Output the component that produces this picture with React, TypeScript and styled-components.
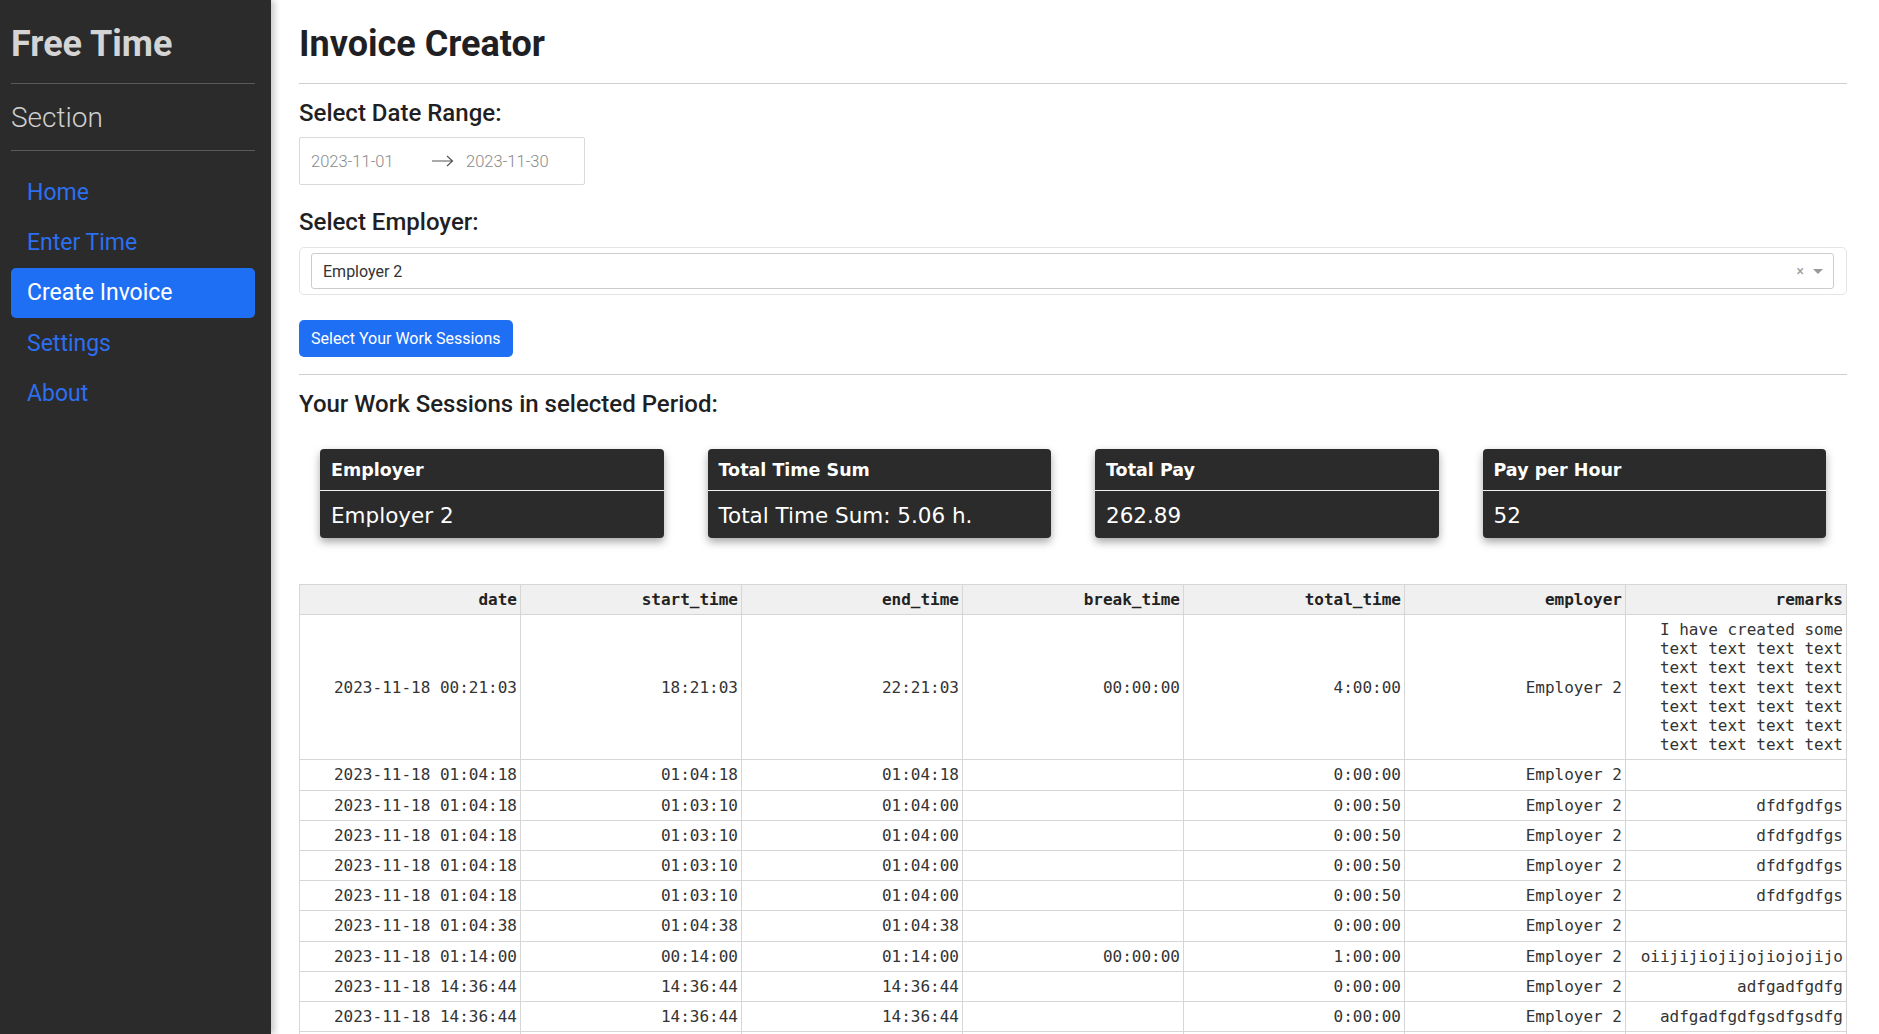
import React from "react";
import styled, { createGlobalStyle } from "styled-components";

const GlobalStyle = createGlobalStyle`
  html, body { margin: 0; padding: 0; background: #ffffff; }
  body { font-family: Roboto, "Open Sans", sans-serif; color: #262730; }
  * { box-sizing: border-box; }
`;

const Layout = styled.div`
  display: flex;
  min-height: 100vh;
`;

const Sidebar = styled.aside`
  flex: 0 0 271px;
  height: 100vh;
  position: sticky;
  top: 0;
  background: #2b2b2b;
  padding: 0 16px 0 11px;
  box-shadow: 4px 0 6px rgba(0, 0, 0, 0.2);
  z-index: 1;
`;

const Brand = styled.h1`
  margin: 22px 0 0;
  font-family: Roboto, sans-serif;
  font-weight: 700;
  font-size: 36px;
  line-height: 44px;
  color: #d4d4d4;
`;

const SideRule = styled.hr<{ $top: number }>`
  border: 0;
  border-top: 1px solid #5a5a5a;
  margin: ${(p) => p.$top}px 0 0;
`;

const SectionTitle = styled.h2`
  margin: 18px 0 0;
  font-family: Roboto, sans-serif;
  font-weight: 300;
  font-size: 28px;
  line-height: 32px;
  color: #cfcfcf;
`;

const Nav = styled.nav`
  display: flex;
  flex-direction: column;
  margin-top: 16px;
`;

const NavItem = styled.a<{ $active?: boolean }>`
  display: flex;
  align-items: center;
  height: 50.4px;
  padding-left: 16px;
  border-radius: 5px;
  font-family: Roboto, sans-serif;
  font-size: 23px;
  text-decoration: none;
  color: ${(p) => (p.$active ? "#ffffff" : "#2c6ff0")};
  background: ${(p) => (p.$active ? "#1f6ff5" : "transparent")};
  cursor: pointer;
`;

const Main = styled.main`
  flex: 1;
  padding: 0 32px 40px 28px;
  min-width: 0;
`;

const Title = styled.h1`
  margin: 22px 0 0;
  font-family: Roboto, sans-serif;
  font-weight: 700;
  font-size: 36px;
  line-height: 44px;
  color: #1f1f24;
`;

const Rule = styled.hr<{ $top: number }>`
  border: 0;
  border-top: 1px solid #cfcfcf;
  margin: ${(p) => p.$top}px 0 0;
`;

const SubTitle = styled.h3<{ $top: number }>`
  margin: ${(p) => p.$top}px 0 0;
  font-family: Roboto, sans-serif;
  font-weight: 500;
  font-size: 24px;
  line-height: 30px;
  color: #1f1f24;
`;

const DateRange = styled.div`
  margin-top: 9px;
  width: 286px;
  height: 48px;
  display: flex;
  align-items: center;
  padding-left: 11px;
  border: 1px solid #d9d9d9;
  border-radius: 2px;
  font-family: Roboto, sans-serif;
  font-weight: 300;
  font-size: 16.5px;
  color: #8a8a8a;
`;

const DateValue = styled.span<{ $w?: number }>`
  width: ${(p) => (p.$w ? `${p.$w}px` : "auto")};
`;

const ArrowIcon = styled.svg`
  width: 22px;
  height: 12px;
  margin-right: 12px;
  flex: none;
`;

const SelectWrap = styled.div`
  margin-top: 10px;
  height: 48px;
  padding: 5px 12px 5px 11px;
  border: 1px solid #e4e4e4;
  border-radius: 5px;
`;

const Select = styled.div`
  height: 36px;
  display: flex;
  align-items: center;
  padding: 0 10px 0 11px;
  border: 1px solid #cccccc;
  border-radius: 3px;
  font-family: Roboto, sans-serif;
  font-size: 16px;
  color: #333;
`;

const SelectValue = styled.span`
  flex: 1;
`;

const Clear = styled.span`
  color: #999;
  font-size: 14px;
  margin-right: 9px;
`;

const Caret = styled.span`
  width: 0;
  height: 0;
  border-left: 5px solid transparent;
  border-right: 5px solid transparent;
  border-top: 5px solid #999;
`;

const Button = styled.button`
  margin-top: 25px;
  height: 37px;
  padding: 0 12px;
  border: 0;
  border-radius: 5px;
  background: #1f6ff5;
  color: #fff;
  font-family: Roboto, sans-serif;
  font-size: 16px;
  cursor: pointer;
`;

const Cards = styled.div`
  margin-top: 30px;
  display: grid;
  grid-template-columns: repeat(4, 1fr);
  column-gap: 44px;
  padding: 0 21px;
`;

const Card = styled.div`
  height: 89px;
  background: #2b2b2b;
  border-radius: 4px;
  box-shadow: 0 4px 8px rgba(0, 0, 0, 0.35);
  color: #fff;
  font-family: "DejaVu Sans", sans-serif;
  display: flex;
  flex-direction: column;
`;

const CardHead = styled.div`
  height: 42px;
  display: flex;
  align-items: center;
  padding-left: 11px;
  font-weight: 700;
  font-size: 17.5px;
  border-bottom: 1.5px solid #f2f2f2;
`;

const CardBody = styled.div`
  flex: 1;
  display: flex;
  align-items: center;
  padding-left: 11px;
  padding-top: 2px;
  font-size: 21.5px;
`;

const Table = styled.table`
  margin-top: 46px;
  width: 100%;
  border-collapse: collapse;
  table-layout: fixed;
  font-family: "DejaVu Sans Mono", monospace;
  font-size: 16px;
  color: #333;
`;

const Th = styled.th`
  height: 30px;
  padding: 0 3px;
  text-align: right;
  font-weight: 700;
  background: #f0f0f0;
  border: 1px solid #d6d6d6;
  color: #222;
`;

const Td = styled.td`
  padding: 5px 3px 5px;
  line-height: 19.2px;
  text-align: right;
  vertical-align: middle;
  border: 1px solid #d6d6d6;
  border-top: 0;
  word-wrap: break-word;
`;

const longText = "I have created some " + Array(24).fill("text").join(" ");

const rows: string[][] = [
  ["2023-11-18 00:21:03", "18:21:03", "22:21:03", "00:00:00", "4:00:00", "Employer 2", longText],
  ["2023-11-18 01:04:18", "01:04:18", "01:04:18", "", "0:00:00", "Employer 2", ""],
  ["2023-11-18 01:04:18", "01:03:10", "01:04:00", "", "0:00:50", "Employer 2", "dfdfgdfgs"],
  ["2023-11-18 01:04:18", "01:03:10", "01:04:00", "", "0:00:50", "Employer 2", "dfdfgdfgs"],
  ["2023-11-18 01:04:18", "01:03:10", "01:04:00", "", "0:00:50", "Employer 2", "dfdfgdfgs"],
  ["2023-11-18 01:04:18", "01:03:10", "01:04:00", "", "0:00:50", "Employer 2", "dfdfgdfgs"],
  ["2023-11-18 01:04:38", "01:04:38", "01:04:38", "", "0:00:00", "Employer 2", ""],
  ["2023-11-18 01:14:00", "00:14:00", "01:14:00", "00:00:00", "1:00:00", "Employer 2", "oiijijiojijojiojojijo"],
  ["2023-11-18 14:36:44", "14:36:44", "14:36:44", "", "0:00:00", "Employer 2", "adfgadfgdfg"],
  ["2023-11-18 14:36:44", "14:36:44", "14:36:44", "", "0:00:00", "Employer 2", "adfgadfgdfgsdfgsdfg"],
  ["2023-11-18 14:36:44", "14:36:44", "14:36:44", "", "0:00:00", "Employer 2", ""],
];

const headers = ["date", "start_time", "end_time", "break_time", "total_time", "employer", "remarks"];

const cards = [
  { head: "Employer", body: "Employer 2" },
  { head: "Total Time Sum", body: "Total Time Sum: 5.06 h." },
  { head: "Total Pay", body: "262.89" },
  { head: "Pay per Hour", body: "52" },
];

const navItems = ["Home", "Enter Time", "Create Invoice", "Settings", "About"];

export default function App() {
  return (
    <>
      <GlobalStyle />
      <Layout>
        <Sidebar>
          <Brand>Free Time</Brand>
          <SideRule $top={17} />
          <SectionTitle>Section</SectionTitle>
          <SideRule $top={16} />
          <Nav>
            {navItems.map((n) => (
              <NavItem key={n} $active={n === "Create Invoice"}>
                {n}
              </NavItem>
            ))}
          </Nav>
        </Sidebar>
        <Main>
          <Title>Invoice Creator</Title>
          <Rule $top={17} />
          <SubTitle $top={14}>Select Date Range:</SubTitle>
          <DateRange>
            <DateValue $w={121}>2023-11-01</DateValue>
            <ArrowIcon viewBox="0 0 22 12">
              <path d="M0 6 H20.5 M15 1 L20.5 6 L15 11" fill="none" stroke="#555" strokeWidth="1.2" />
            </ArrowIcon>
            <DateValue>2023-11-30</DateValue>
          </DateRange>
          <SubTitle $top={22}>Select Employer:</SubTitle>
          <SelectWrap>
            <Select>
              <SelectValue>Employer 2</SelectValue>
              <Clear>×</Clear>
              <Caret />
            </Select>
          </SelectWrap>
          <Button>Select Your Work Sessions</Button>
          <Rule $top={17} />
          <SubTitle $top={14}>Your Work Sessions in selected Period:</SubTitle>
          <Cards>
            {cards.map((c) => (
              <Card key={c.head}>
                <CardHead>{c.head}</CardHead>
                <CardBody>{c.body}</CardBody>
              </Card>
            ))}
          </Cards>
          <Table>
            <thead>
              <tr>
                {headers.map((h) => (
                  <Th key={h}>{h}</Th>
                ))}
              </tr>
            </thead>
            <tbody>
              {rows.map((r, i) => (
                <tr key={i}>
                  {r.map((c, j) => (
                    <Td key={j}>{c}</Td>
                  ))}
                </tr>
              ))}
            </tbody>
          </Table>
        </Main>
      </Layout>
    </>
  );
}
